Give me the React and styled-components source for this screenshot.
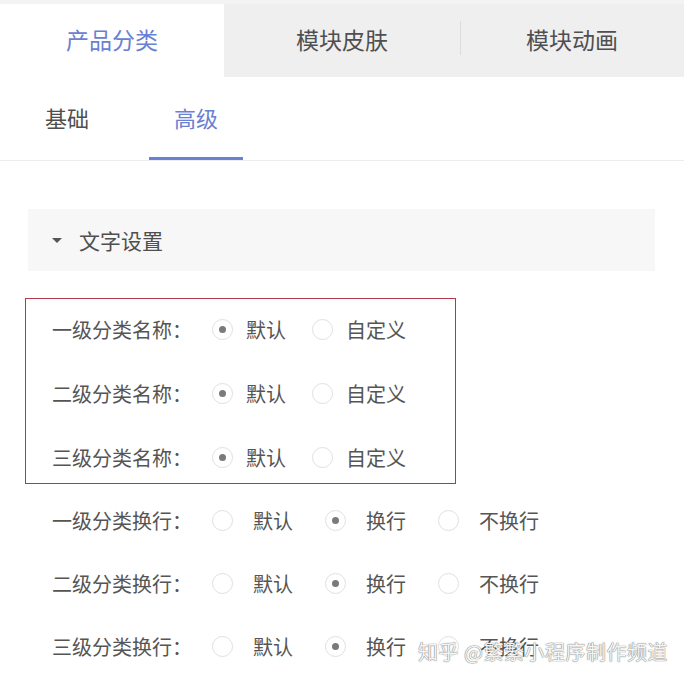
import React from 'react';
import styled, { createGlobalStyle } from 'styled-components';

const GlobalStyle = createGlobalStyle`
  html, body {
    margin: 0;
    padding: 0;
    background: #fff;
  }
  body {
    font-family: 'Noto Sans CJK SC', 'Noto Sans', sans-serif;
    color: #555;
  }
`;

const Page = styled.div`
  width: 684px;
  height: 679px;
  overflow: hidden;
  position: relative;
  background: #fff;
`;

const TopTabs = styled.div`
  display: flex;
  height: 77px;
  border-top: 4px solid #f3f3f3;
  box-sizing: border-box;
`;

const TopTab = styled.div`
  flex: 0 0 ${p => p.$w}px;
  display: flex;
  align-items: center;
  justify-content: center;
  position: relative;
  font-size: 23px;
  color: ${p => (p.$active ? '#6a80d2' : '#4f4f4f')};
  background: ${p => (p.$active ? '#fff' : '#efefef')};
  padding-bottom: 4px;
  box-sizing: border-box;

  ${p =>
    p.$divider &&
    `
    &::before {
      content: '';
      position: absolute;
      left: 0;
      top: 17px;
      height: 34px;
      width: 1px;
      background: #dcdcdc;
    }
  `}
`;

const SubTabs = styled.div`
  display: flex;
  height: 84px;
  padding-left: 22px;
  border-bottom: 1px solid #ececec;
  box-sizing: border-box;
`;

const SubTab = styled.div`
  width: ${p => p.$w}px;
  display: flex;
  align-items: center;
  justify-content: center;
  font-size: 22px;
  color: ${p => (p.$active ? '#6a80d2' : '#4f4f4f')};
  border-bottom: 3px solid ${p => (p.$active ? '#6a80d2' : 'transparent')};
  box-sizing: border-box;
`;

const Panel = styled.div`
  padding: 48px 29px 0 25px;
`;

const SectionHeader = styled.div`
  margin-left: 3px;
  height: 62px;
  background: #f7f7f7;
  display: flex;
  align-items: center;
  padding-left: 24px;
  gap: 17px;
  font-size: 21px;
  color: #4f4f4f;
`;

const Caret = styled.span`
  width: 0;
  height: 0;
  border-left: 5px solid transparent;
  border-right: 5px solid transparent;
  border-top: 5px solid #555;
`;

const HighlightBox = styled.div`
  margin-top: 27px;
  width: 431px;
  box-sizing: border-box;
  border: 1px solid #b0394c;
  padding: 10px 0 6px 26px;
  display: flex;
  flex-direction: column;
  gap: 24px;
`;

const Rows = styled.div`
  margin-top: 16px;
  padding-left: 27px;
  display: flex;
  flex-direction: column;
  gap: 23px;
`;

const Row = styled.div`
  display: flex;
  align-items: center;
  height: 40px;
`;

const Label = styled.span`
  width: 160px;
  font-size: 20px;
  color: #555;
  white-space: nowrap;
`;

const Option = styled.label`
  display: flex;
  align-items: center;
  gap: ${p => p.$gap}px;
  margin-right: ${p => p.$space}px;
  font-size: 20px;
  color: #555;
`;

const Radio = styled.span`
  width: 21px;
  height: 21px;
  border-radius: 50%;
  border: 1px solid #e0e0e0;
  box-sizing: border-box;
  display: flex;
  align-items: center;
  justify-content: center;

  &::after {
    content: '';
    width: 7px;
    height: 7px;
    border-radius: 50%;
    background: ${p => (p.$checked ? '#7a7a7a' : 'transparent')};
  }
`;

const Watermark = styled.div`
  position: absolute;
  left: 418px;
  top: 637px;
  font-size: 20px;
  color: #f4f4f4;
  text-shadow: 0 0 1px #777, 0 0 1px #777;
  white-space: nowrap;
  letter-spacing: 0.5px;
`;

const nameRows = ['一级分类名称：', '二级分类名称：', '三级分类名称：'];
const wrapRows = ['一级分类换行：', '二级分类换行：', '三级分类换行：'];

const RadioRow = ({ label, options, checked, gap, space }) => (
  <Row>
    <Label>{label}</Label>
    {options.map((opt, i) => (
      <Option key={opt} $gap={gap} $space={space}>
        <Radio $checked={i === checked} />
        {opt}
      </Option>
    ))}
  </Row>
);

const App = () => (
  <Page>
    <GlobalStyle />
    <TopTabs>
      <TopTab $w={224} $active>产品分类</TopTab>
      <TopTab $w={236}>模块皮肤</TopTab>
      <TopTab $w={224} $divider>模块动画</TopTab>
    </TopTabs>

    <SubTabs>
      <SubTab $w={90}>基础</SubTab>
      <SubTab $w={37} />
      <SubTab $w={94} $active>高级</SubTab>
    </SubTabs>

    <Panel>
      <SectionHeader>
        <Caret />
        文字设置
      </SectionHeader>

      <HighlightBox>
        {nameRows.map(l => (
          <RadioRow key={l} label={l} options={['默认', '自定义']} checked={0} gap={13} space={26} />
        ))}
      </HighlightBox>

      <Rows>
        {wrapRows.map(l => (
          <RadioRow key={l} label={l} options={['默认', '换行', '不换行']} checked={1} gap={20} space={32} />
        ))}
      </Rows>
    </Panel>

    <Watermark>知乎 @繁繁小程序制作频道</Watermark>
  </Page>
);

export default App;
